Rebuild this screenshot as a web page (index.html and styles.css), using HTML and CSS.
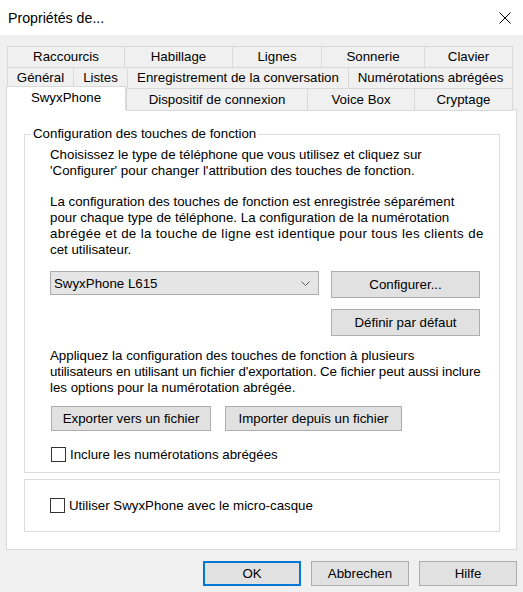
FILE: index.html
```html
<!DOCTYPE html>
<html lang="fr">
<head>
<meta charset="utf-8">
<title>Propriétés de...</title>
<link rel="stylesheet" href="styles.css">
</head>
<body>
<div class="dialog">
  <header class="titlebar">
    <span class="title">Propriétés de...</span>
    <svg class="close" width="12" height="12" viewBox="0 0 12 12" aria-label="Fermer">
      <path d="M0.5 0.5L11.5 11.5M11.5 0.5L0.5 11.5" stroke="#000" stroke-width="1" fill="none"/>
    </svg>
  </header>

  <nav class="tabs">
    <div class="tab-row row1">
      <div class="tab">Raccourcis</div>
      <div class="tab">Habillage</div>
      <div class="tab">Lignes</div>
      <div class="tab">Sonnerie</div>
      <div class="tab">Clavier</div>
    </div>
    <div class="tab-row row2">
      <div class="tab">Général</div>
      <div class="tab">Listes</div>
      <div class="tab">Enregistrement de la conversation</div>
      <div class="tab">Numérotations abrégées</div>
    </div>
    <div class="tab-row row3">
      <div class="tab active">SwyxPhone</div>
      <div class="tab">Dispositif de connexion</div>
      <div class="tab">Voice Box</div>
      <div class="tab">Cryptage</div>
    </div>
  </nav>

  <section class="panel">
    <div class="group group-main">
      <div class="group-title">Configuration des touches de fonction</div>
      <p class="text first">Choisissez le type de téléphone que vous utilisez et cliquez sur<br>'Configurer' pour changer l'attribution des touches de fonction.</p>
      <p class="text second">La configuration des touches de fonction est enregistrée séparément<br>pour chaque type de téléphone. La configuration de la numérotation<br><span class="wide">abrégée et de la touche de ligne est identique pour tous les clients de</span><br>cet utilisateur.</p>

      <div class="phone-row">
        <div class="select">
          <span>SwyxPhone L615</span>
          <svg class="chevron" width="9" height="5" viewBox="0 0 9 5"><path d="M0.5 0.5L4.5 4.5L8.5 0.5" stroke="#606060" stroke-width="1" fill="none"/></svg>
        </div>
        <div class="btn-col">
          <div class="btn btn-tall">Configurer...</div>
          <div class="btn btn-tall">Définir par défaut</div>
        </div>
      </div>

      <p class="text third">Appliquez la configuration des touches de fonction à plusieurs<br><span class="narrow">utilisateurs en utilisant un fichier d'exportation. Ce fichier peut aussi inclure</span><br>les options pour la numérotation abrégée.</p>

      <div class="file-row">
        <div class="btn btn-export">Exporter vers un fichier</div>
        <div class="btn btn-import">Importer depuis un fichier</div>
      </div>

      <label class="check check-speed"><span class="box"></span><span>Inclure les numérotations abrégées</span></label>
    </div>

    <div class="group group-headset">
      <label class="check"><span class="box"></span><span>Utiliser SwyxPhone avec le micro-casque</span></label>
    </div>
  </section>

  <footer class="footer">
    <div class="btn btn-foot default">OK</div>
    <div class="btn btn-foot">Abbrechen</div>
    <div class="btn btn-foot">Hilfe</div>
  </footer>
</div>
</body>
</html>
```

FILE: styles.css
```css
* { box-sizing: border-box; }

html, body {
  margin: 0;
  padding: 0;
}

body {
  width: 523px;
  height: 592px;
  overflow: hidden;
  background: #f0f0f0;
  font-family: "Liberation Sans", Arial, sans-serif;
  font-size: 13.3px;
  color: #000;
}

.dialog {
  width: 523px;
  height: 592px;
}

.titlebar {
  height: 35px;
  background: #fff;
  display: flex;
  align-items: center;
  justify-content: space-between;
  padding: 0 12px 0 8px;
}

.title {
  font-size: 14.2px;
  line-height: 18px;
  padding-top: 1px;
}

.close {
  display: block;
  margin-top: 1px;
}

/* tabs */
.tabs {
  margin: 11px 0 0 7px;
  width: 506px;
}

.tab-row {
  display: grid;
  height: 21px;
}

.row1 { grid-template-columns: 117px 108px 89px 103px 89px; }
.row2 { grid-template-columns: 66px 54px 221px 165px; }
.row3 {
  grid-template-columns: 119px 181px 107px 99px;
  height: 22px;
  margin-bottom: -1px;
  position: relative;
  z-index: 1;
}

.tab {
  border-top: 1px solid #d9d9d9;
  border-left: 1px solid #d9d9d9;
  background: #f0f0f0;
  font-size: 13.3px;
  line-height: 20px;
  text-align: center;
  white-space: nowrap;
}

.tab:last-child { border-right: 1px solid #d9d9d9; }

.row3 .tab {
  border-bottom: 1px solid #d9d9d9;
  line-height: 21px;
}

.row3 .tab.active {
  background: #fff;
  margin: -2px 0 0 -1px;
  height: 24px;
  border-right: 1px solid #d9d9d9;
  border-bottom: none;
  line-height: 22px;
}

/* panel */
.panel {
  margin: 0 6px;
  background: #fff;
  border: 1px solid #d9d9d9;
  padding: 24px 16px 17px 17px;
}

.group {
  border: 1px solid #dcdcdc;
}

.group-main {
  padding: 0 19px 10px 25px;
}

.group-title {
  width: fit-content;
  margin: -9px 0 0 -19px;
  padding: 0 2px;
  background: #fff;
  line-height: 16px;
  white-space: nowrap;
}

.text {
  margin: 0;
  line-height: 16px;
  white-space: nowrap;
}

.text.first { margin-top: 5px; }
.text.second { margin-top: 15px; }
.text.third { margin-top: 12px; }

.wide { letter-spacing: 0.35px; }
.narrow { letter-spacing: -0.1px; }

.phone-row {
  margin-top: 13px;
  display: grid;
  grid-template-columns: 269px 149px;
  column-gap: 12px;
  align-items: start;
}

.select {
  height: 24px;
  background: #e5e5e5;
  border: 1px solid #acacac;
  display: flex;
  align-items: center;
  justify-content: space-between;
  padding: 0 8px 0 3px;
}

.chevron { display: block; }

.btn-col {
  display: flex;
  flex-direction: column;
  gap: 11px;
}

.btn {
  background: #e1e1e1;
  border: 1px solid #adadad;
  display: flex;
  align-items: center;
  justify-content: center;
  white-space: nowrap;
}

.btn-tall { height: 27px; }

.file-row {
  margin-top: 10px;
  display: flex;
  gap: 14px;
  padding-left: 1px;
}

.btn-export { width: 160px; height: 25px; }
.btn-import { width: 177px; height: 25px; }

.check {
  display: flex;
  align-items: center;
  gap: 4px;
  line-height: 15px;
}

.check-speed {
  margin-top: 16px;
  padding-left: 1px;
}

.box {
  width: 15px;
  height: 15px;
  border: 1px solid #333;
  background: #fff;
  flex: none;
}

.group-headset {
  margin-top: 6px;
  padding: 18px 25px;
}

.footer {
  display: flex;
  justify-content: flex-end;
  gap: 10px;
  padding: 11px 6px 0 0;
}

.btn-foot {
  width: 98px;
  height: 25px;
}

.btn-foot.default {
  border: 2px solid #0078d7;
}
```
